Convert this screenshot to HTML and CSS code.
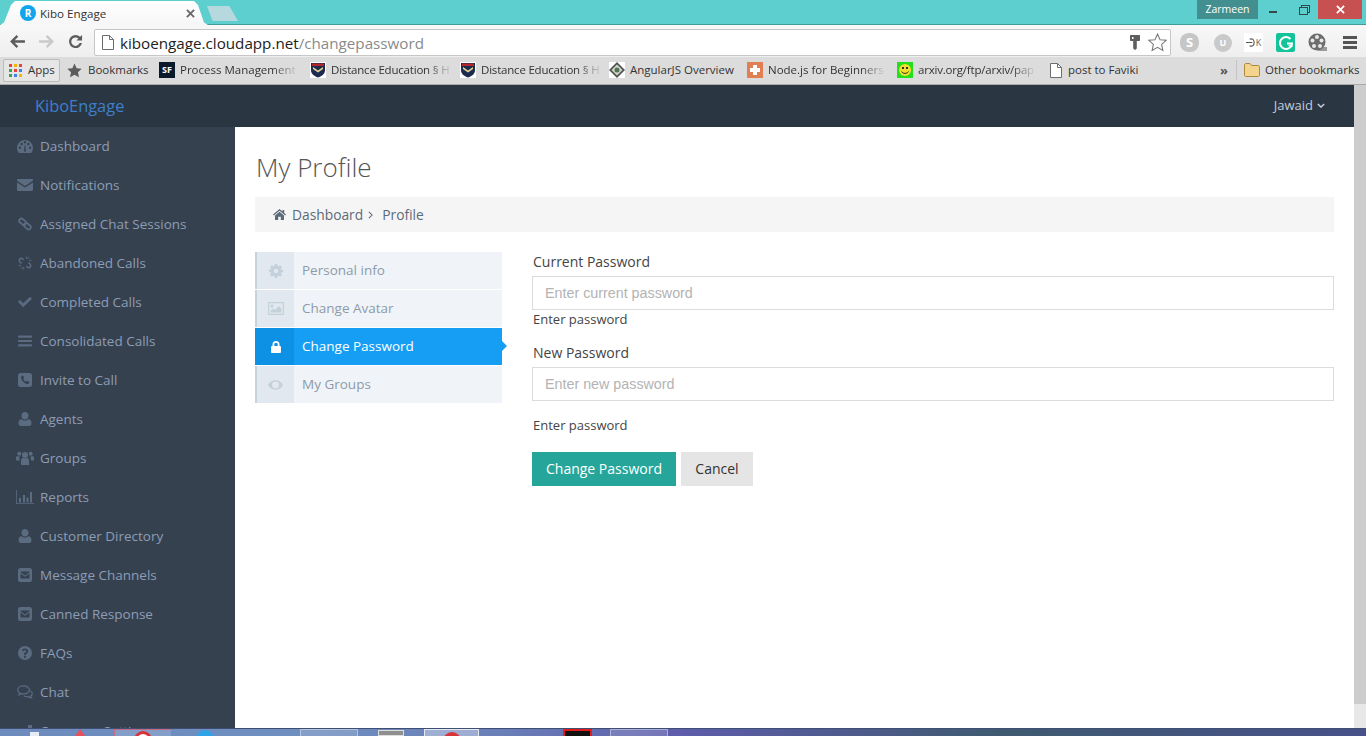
FILE: index.html
```html
<!DOCTYPE html>
<html lang="en">
<head>
  <meta charset="UTF-8">
  <title>Kibo Engage</title>
  <link rel="stylesheet" href="styles.css">
</head>
<body>

  <svg class="defs" width="0" height="0">
    <symbol id="i-gauge" viewBox="0 0 16 14"><path d="M8 1a8 8 0 0 0-8 8c0 1.600.5 3.100 1.300 4.300l.5.7h12.400l.5-.7A8 8 0 0 0 16 9a8 8 0 0 0-8-8zM3 10a1.200 1.200 0 1 1 0-2.400A1.200 1.200 0 0 1 3 10zm1.700-3.800a1.200 1.200 0 1 1 0-2.400 1.200 1.200 0 0 1 0 2.400zM8 4.500A1.200 1.200 0 1 1 8 2.100a1.200 1.200 0 0 1 0 2.400zm.9 8H7.100L7.600 6h.8zM13 10a1.200 1.200 0 1 1 0-2.400A1.200 1.200 0 0 1 13 10zm-1.700-3.800a1.200 1.200 0 1 1 0-2.400 1.200 1.200 0 0 1 0 2.400z" fill-rule="evenodd"/></symbol>
    <symbol id="i-mail" viewBox="-1 -1 18 14"><path d="M0 1.200C0 .5.500 0 1.200 0h13.600c.7 0 1.200.5 1.200 1.200v.6L8 7 0 1.800zM0 3.400V10.800c0 .7.500 1.200 1.200 1.200h13.600c.7 0 1.200-.5 1.200-1.200V3.400L8 8.600z"/></symbol>
    <symbol id="i-link" viewBox="0 0 16 16"><g fill="none" stroke="currentColor" stroke-width="2"><rect x="1" y="3" width="8.500" height="5" rx="2.500" transform="rotate(40 5.250 5.500)"/><rect x="6.500" y="8" width="8.500" height="5" rx="2.500" transform="rotate(40 10.750 10.500)"/></g></symbol>
    <symbol id="i-unlink" viewBox="0 0 16 16"><path fill="none" stroke="currentColor" stroke-width="1.700" d="M6.500 4.500 5 3a2.300 2.300 0 0 0-3.200 3.200L4 8.500M9.500 11.500 11 13a2.300 2.300 0 0 0 3.200-3.200L12 7.500"/><path fill="none" stroke="currentColor" d="M9.500 .5v3M12.500 1l-1.500 2.500M15.500 5h-3M6.500 15.500v-3M3.500 15 5 12.500M.5 11h3"/></symbol>
    <symbol id="i-check" viewBox="-2.300 -2 20.600 16"><path d="M6 12 0 6l2.200-2.200L6 7.500 13.800 0 16 2.200z"/></symbol>
    <symbol id="i-bars" viewBox="-2.500 -1.500 21 16"><path d="M0 0h16v2.600H0zM0 5.200h16v2.600H0zM0 10.400h16V13H0z"/></symbol>
    <symbol id="i-phone" viewBox="0 0 14 14"><path fill-rule="evenodd" d="M2.500 0h9A2.500 2.500 0 0 1 14 2.500v9a2.500 2.500 0 0 1-2.500 2.500h-9A2.500 2.500 0 0 1 0 11.500v-9A2.500 2.500 0 0 1 2.500 0zM5 2.600 3.800 3c-.8.400-.9 1.500-.5 2.800.6 2 2.900 4.300 4.900 4.900 1.300.4 2.400.3 2.800-.5l.4-1.200L8.900 7.800l-.9 1c-1.200-.5-2.300-1.600-2.800-2.800l1-.9z"/></symbol>
    <symbol id="i-user" viewBox="0 0 13 14"><path d="M6.500 0a3.500 3.500 0 0 1 3.500 3.800A3.500 3.500 0 0 1 6.500 7.500 3.500 3.500 0 0 1 3 3.800 3.500 3.500 0 0 1 6.500 0zM3.200 7.200c.9.800 2 1.300 3.300 1.300s2.400-.5 3.300-1.300C11.900 7.300 13 8.600 13 11.500 13 13 12 14 10.600 14H2.400C1 14 0 13 0 11.500 0 8.600 1.100 7.300 3.200 7.200z"/></symbol>
    <symbol id="i-users" viewBox="0 0 18 14"><circle cx="9" cy="4" r="3"/><circle cx="3.300" cy="2.700" r="2"/><circle cx="14.700" cy="2.700" r="2"/><path d="M5 14V10c0-2 1-3 2-3.200.5.400 1.200.7 2 .7s1.500-.3 2-.7C12 7 13 8 13 10v4zM0 9.500V7c0-1.300.7-2 1.500-2 .5.400 1.100.6 1.800.6h.5c-.2.500 0 1-.4 1.500C3 8 3.800 8.800 3.800 9.500zM18 9.500V7c0-1.300-.7-2-1.500-2-.5.400-1.100.6-1.800.6h-.5c.2.500 0 1 .4 1.500.9.900.2 1.700.2 2.400z"/></symbol>
    <symbol id="i-chart" viewBox="0 0 18 14"><path d="M0 0h.8v13.200H18v.8H0zM3 8h2v4.500H3zM7 5h2v7.500H7zM10.500 7.500h2v5h-2zM14 2h2v10.500h-2z"/></symbol>
    <symbol id="i-envelope-box" viewBox="0 0 14 14"><path fill-rule="evenodd" d="M2.500 0h9A2.500 2.500 0 0 1 14 2.500v9a2.500 2.500 0 0 1-2.500 2.500h-9A2.500 2.500 0 0 1 0 11.500v-9A2.500 2.500 0 0 1 2.500 0zM3 3.500c-.3 0-.5.200-.5.500v.3L7 7.500l4.500-3.200V4c0-.3-.2-.5-.5-.5zM2.500 5.600V10c0 .3.200.5.500.5h8c.3 0 .5-.2.500-.5V5.600L7 8.800z"/></symbol>
    <symbol id="i-help" viewBox="0 0 14 14"><path fill-rule="evenodd" d="M7 0a7 7 0 1 1 0 14A7 7 0 0 1 7 0zM6 9.700v2h2v-2zM7 2.500C5.500 2.500 4.400 3.200 3.800 4.300l1.400 1C5.600 4.700 6.100 4.300 6.900 4.300c.7 0 1.200.4 1.200.9 0 .6-.5.900-1.100 1.200-.7.400-1 1-1 1.700v.7h2v-.5c0-.4.300-.6.800-.9.800-.5 1.400-1.100 1.400-2.200 0-1.600-1.500-2.700-3.200-2.700z"/></symbol>
    <symbol id="i-chat" viewBox="0 0 17 15"><path fill="none" stroke="currentColor" stroke-width="1.300" d="M7 1C3.500 1 .7 2.900.7 5.300c0 1.400 1 2.600 2.400 3.400-.2.700-.6 1.300-1 1.700 1.100-.2 2-.6 2.800-1.100.7.100 1.400.2 2.100.2 3.500 0 6.300-1.900 6.300-4.200S10.500 1 7 1z"/><path fill="none" stroke="currentColor" stroke-width="1.300" d="M14.500 6.500c1.100.7 1.800 1.700 1.800 2.800 0 1.100-.8 2.100-2 2.800.2.700.6 1.200 1 1.600-1.200-.1-2.200-.6-3-1.200-2 .3-4-.1-5.300-1"/></symbol>
    <symbol id="i-cogs" viewBox="0 0 18 14"><path d="M3 6h6v6H3zM5 4h2v2H5zM12 1h4v4h-4z"/></symbol>
    <symbol id="i-gear" viewBox="0 0 14 14"><path fill-rule="evenodd" d="M5.700 0h2.600l.3 1.900 1 .4L11.200 1.200 13 3l-1.100 1.600.4 1 1.700.3v2.400l-1.700.3-.4 1L13 11l-1.800 1.800-1.600-1.100-1 .4-.3 1.900H5.700l-.3-1.900-1-.4-1.600 1.100L1 11l1.100-1.600-.4-1L0 8.100V5.700l1.700-.3.4-1L1 3l1.800-1.800 1.600 1.100 1-.4zM7 4.800a2.200 2.200 0 1 0 0 4.400 2.200 2.200 0 0 0 0-4.400z"/></symbol>
    <symbol id="i-picture" viewBox="0 0 16 13"><path fill-rule="evenodd" d="M1 0h14a1 1 0 0 1 1 1v11a1 1 0 0 1-1 1H1a1 1 0 0 1-1-1V1a1 1 0 0 1 1-1zm.2 1.200v10.600h13.600V1.200zM2.500 10.500V9L5.300 6.400 7 8l3.800-4 2.700 2.800v3.700zM4 5.500a1.500 1.500 0 1 1 0-3 1.500 1.500 0 0 1 0 3z"/></symbol>
    <symbol id="i-lock" viewBox="0 0 10 12"><path fill-rule="evenodd" d="M5 0a3.500 3.500 0 0 1 3.500 3.500V5h.5a1 1 0 0 1 1 1v5a1 1 0 0 1-1 1H1a1 1 0 0 1-1-1V6a1 1 0 0 1 1-1h.5V3.500A3.500 3.500 0 0 1 5 0zm0 1.800c-1 0-1.700.7-1.700 1.700V5h3.400V3.500c0-1-.7-1.700-1.700-1.700z"/></symbol>
    <symbol id="i-eye" viewBox="0 0 16 10"><path fill-rule="evenodd" d="M8 0c3.500 0 6.400 2 8 5-1.600 3-4.500 5-8 5S1.600 8 0 5c1.600-3 4.500-5 8-5zm0 1.300a3.700 3.700 0 1 0 0 7.400 3.700 3.700 0 0 0 0-7.400z"/></symbol>
    <symbol id="i-home" viewBox="0 0 13 11"><path d="M6.500 0 9.500 2.500V1h1.700v3l1.800 1.600-.8.900-5.700-4.800L.8 6.500 0 5.600zM2 6.500l4.500-3.700L11 6.500V11H7.800V7.800H5.200V11H2z"/></symbol>
    <symbol id="i-doc" viewBox="0 0 12 15"><path fill="#fff" stroke="#6d6d6d" d="M.5.500h7l4 4v10H.5z"/><path fill="none" stroke="#6d6d6d" d="M7.500.500v4h4"/></symbol>
    <symbol id="i-shield" viewBox="0 0 16 16"><path fill="#fff" d="M0 0h16v16H0z"/><path fill="#1d2a50" d="M1 1h14v7c0 4-3 6-7 7.500C4 14 1 12 1 8z"/><path fill="#b3262c" d="M2 1.500h12V4H2z"/><path fill="#e5d590" d="M3 5l5 3.500L13 5v2L8 10.500 3 7z"/></symbol>
  </svg>

  <div class="tabstrip">
    <div class="tab">
      <span class="tab-favicon">R</span>
      <span class="tab-title">Kibo Engage</span>
      <svg viewBox="0 0 10 10" width="9" height="9"><path fill="none" stroke="#666" stroke-width="2" d="M1 1l8 8M9 1l-8 8"/></svg>
    </div>
    <div class="new-tab"></div>
    <div class="win-controls">
      <span class="win-user">Zarmeen</span>
      <span class="win-btn"><span class="win-min"></span></span>
      <span class="win-btn"><span class="win-restore"></span></span>
      <span class="win-close"><svg viewBox="0 0 10 10" width="9" height="9"><path fill="none" stroke="#fff" stroke-width="2" d="M1 1l8 8M9 1l-8 8"/></svg></span>
    </div>
  </div>

  <div class="toolbar">
    <svg class="nav-icon" viewBox="0 0 16 14" width="15" height="13"><path fill="#5c5c5c" d="M7 0l1.800 1.800L5 5.600h11v2.800H5l3.800 3.800L7 14 0 7z"/></svg>
    <svg class="nav-icon" viewBox="0 0 16 14" width="15" height="13"><path fill="#c9c9c9" d="M9 0 7.200 1.800 11 5.600H0v2.800h11l-3.800 3.800L9 14l7-7z"/></svg>
    <svg class="nav-icon" viewBox="0 0 16 16" width="15" height="15"><path fill="#5c5c5c" d="M8 1a7 7 0 0 1 4.900 2L15 1v6H9l2.100-2.100A4.500 4.500 0 1 0 12.300 9.500h2.600A7 7 0 1 1 8 1z"/></svg>
    <div class="omnibox">
      <svg width="12" height="15"><use href="#i-doc"/></svg>
      <span class="url"><span class="url-host">kiboengage.cloudapp.net</span>/changepassword</span>
      <svg class="key-icon" viewBox="0 0 10 15" width="10" height="15"><path fill="#5e5e5e" fill-rule="evenodd" d="M1 0h8c.6 0 1 .4 1 1v4c0 .6-.4 1-1 1H6.800v7.500L5 15l-1.800-1.500V6H1c-.6 0-1-.4-1-1V1c0-.6.4-1 1-1zm1 2v2h1.500V2z"/></svg>
      <svg class="star-icon" viewBox="0 0 18 18" width="19" height="19"><path fill="#fff" stroke="#777" d="M9 1l2.400 5.300 5.800.6-4.300 3.900 1.200 5.700L9 13.600l-5.100 2.900 1.200-5.700L.8 6.900l5.800-.6z"/></svg>
    </div>
    <div class="ext-icons">
      <span class="ext ext-skype">S</span>
      <span class="ext ext-u">U</span>
      <span class="ext ext-k">
        <svg viewBox="0 0 11 10" width="10" height="9"><path fill="none" stroke="#555" stroke-width="1.200" d="M4 1.500c3-1.500 5 .5 5 3.500S7 10 4 8.500M0 5h7"/></svg>
        <span>K</span>
      </span>
      <span class="ext ext-g">
        <svg viewBox="0 0 14 14" width="14" height="14"><path fill="none" stroke="#fff" stroke-width="2" d="M11.500 3A6 6 0 1 0 13 7.500H8"/><path fill="#fff" d="M9 9h4.500v2H11z"/></svg>
      </span>
      <span class="ext ext-film">
        <svg viewBox="0 0 19 19" width="19" height="19"><path fill="#999" d="M10 14h9v4h-9z"/><circle cx="9" cy="9" r="8.500" fill="#6d6d6d"/><g fill="#e8e8e8"><circle cx="9" cy="4" r="2"/><circle cx="4.500" cy="7.500" r="2"/><circle cx="13.500" cy="7.500" r="2"/><circle cx="6" cy="13" r="2"/><circle cx="12" cy="13" r="2"/></g></svg>
      </span>
      <span class="ext-menu"></span>
    </div>
  </div>

  <div class="bookmarks">
    <div class="bm-apps">
      <span class="apps-grid">
        <i class="c-r"></i><i class="c-y"></i><i class="c-r"></i>
        <i class="c-g"></i><i class="c-r"></i><i class="c-b"></i>
        <i class="c-g"></i><i class="c-b"></i><i class="c-y"></i>
      </span>
      <span class="bm-text">Apps</span>
    </div>
    <div class="bm bm-star">
      <svg viewBox="0 0 16 16" width="15" height="15"><path fill="#5c5c5c" d="M8 .5l2.300 5 5.400.6-4 3.700 1.100 5.400L8 12.500l-4.800 2.700 1.100-5.400-4-3.700 5.400-.6z"/></svg>
      <span class="bm-text">Bookmarks</span>
    </div>
    <div class="bm bm-process">
      <span class="fav fav-sf">SF</span>
      <span class="bm-text bm-fade">Process Management</span>
    </div>
    <div class="bm bm-dist1">
      <svg width="16" height="16"><use href="#i-shield"/></svg>
      <span class="bm-text bm-fade bm-tight">Distance Education § H</span>
    </div>
    <div class="bm bm-dist2">
      <svg width="16" height="16"><use href="#i-shield"/></svg>
      <span class="bm-text bm-fade bm-tight">Distance Education § H</span>
    </div>
    <div class="bm bm-angular">
      <svg viewBox="0 0 16 16" width="16" height="16"><path fill="#fff" d="M0 0h16v16H0z"/><path fill="#555" d="M8 0l8 8-8 8-8-8z"/><path fill="#cfd8c8" d="M8 2.500 13.500 8 8 13.500 2.500 8z"/><circle cx="8" cy="8" r="2.500" fill="#56705a"/></svg>
      <span class="bm-text">AngularJS Overview</span>
    </div>
    <div class="bm bm-node">
      <span class="fav fav-node"></span>
      <span class="bm-text bm-fade">Node.js for Beginners</span>
    </div>
    <div class="bm bm-arxiv">
      <svg viewBox="0 0 16 16" width="16" height="16"><path fill="#22e01a" d="M0 0h16v16H0z"/><circle cx="8" cy="8" r="6" fill="#f0df2c"/><path fill="#333" d="M5 5h2v2H5zM9 5h2v2H9z"/><path fill="none" stroke="#333" d="M4.500 9.500c1.500 2.500 5.500 2.500 7 0"/></svg>
      <span class="bm-text bm-fade bm-tight">arxiv.org/ftp/arxiv/pap</span>
    </div>
    <div class="bm bm-post">
      <svg width="12" height="15"><use href="#i-doc"/></svg>
      <span class="bm-text">post to Faviki</span>
    </div>
    <div class="bm-more">&raquo;</div>
    <div class="bm bm-other">
      <svg viewBox="0 0 16 14" width="16" height="14"><path fill="#f4d38c" stroke="#b08a3c" d="M.5 2c0-.8.500-1.500 1.500-1.500h4l1.500 2H14c1 0 1.500.5 1.500 1.500v8c0 1-.5 1.500-1.500 1.500H2c-1 0-1.500-.5-1.500-1.500z"/></svg>
      <span class="bm-text">Other bookmarks</span>
    </div>
  </div>

  <div class="app">
    <div class="app-main">
      <header class="topbar">
        <a class="brand">KiboEngage</a>
        <div class="user-menu">Jawaid
          <svg viewBox="0 0 10 6" width="8" height="5"><path fill="none" stroke="currentColor" stroke-width="1.800" d="M1 1l4 4 4-4"/></svg>
        </div>
      </header>
      <div class="columns">
        <nav class="sidebar">
          <a class="nav-item"><svg class="ic-16"><use href="#i-gauge"/></svg>Dashboard</a>
          <a class="nav-item"><svg class="ic-16"><use href="#i-mail"/></svg>Notifications</a>
          <a class="nav-item"><svg class="ic-16"><use href="#i-link"/></svg>Assigned Chat Sessions</a>
          <a class="nav-item"><svg class="ic-16"><use href="#i-unlink"/></svg>Abandoned Calls</a>
          <a class="nav-item"><svg class="ic-16"><use href="#i-check"/></svg>Completed Calls</a>
          <a class="nav-item"><svg class="ic-16"><use href="#i-bars"/></svg>Consolidated Calls</a>
          <a class="nav-item"><svg class="ic-16"><use href="#i-phone"/></svg>Invite to Call</a>
          <a class="nav-item"><svg class="ic-16"><use href="#i-user"/></svg>Agents</a>
          <a class="nav-item"><svg class="ic-16"><use href="#i-users"/></svg>Groups</a>
          <a class="nav-item"><svg class="ic-16"><use href="#i-chart"/></svg>Reports</a>
          <a class="nav-item"><svg class="ic-16"><use href="#i-user"/></svg>Customer Directory</a>
          <a class="nav-item"><svg class="ic-16"><use href="#i-envelope-box"/></svg>Message Channels</a>
          <a class="nav-item"><svg class="ic-16"><use href="#i-envelope-box"/></svg>Canned Response</a>
          <a class="nav-item"><svg class="ic-16"><use href="#i-help"/></svg>FAQs</a>
          <a class="nav-item"><svg class="ic-16"><use href="#i-chat"/></svg>Chat</a>
          <a class="nav-item"><svg class="ic-16"><use href="#i-cogs"/></svg>Company Settings</a>
        </nav>
        <main class="content">
          <h1 class="page-title">My Profile</h1>
          <div class="breadcrumb">
            <svg width="13" height="11"><use href="#i-home"/></svg>
            <span>Dashboard</span>
            <svg class="crumb-sep" viewBox="0 0 6 10" width="5" height="8"><path fill="none" stroke="currentColor" stroke-width="1.300" d="M1 1l4 4-4 4"/></svg>
            <span>Profile</span>
          </div>
          <div class="profile">
            <ul class="tabs">
              <li class="tab-row"><span class="tab-ic"><svg width="14" height="14"><use href="#i-gear"/></svg></span><span class="tab-text">Personal info</span></li>
              <li class="tab-row"><span class="tab-ic"><svg width="16" height="13"><use href="#i-picture"/></svg></span><span class="tab-text">Change Avatar</span></li>
              <li class="tab-row active"><span class="tab-ic"><svg width="10" height="12"><use href="#i-lock"/></svg></span><span class="tab-text">Change Password</span></li>
              <li class="tab-row"><span class="tab-ic"><svg width="15" height="10"><use href="#i-eye"/></svg></span><span class="tab-text">My Groups</span></li>
            </ul>
            <form class="pw-form">
              <label class="field-label">Current Password</label>
              <input class="field-input" type="password" placeholder="Enter current password">
              <p class="field-help">Enter password</p>
              <label class="field-label second">New Password</label>
              <input class="field-input" type="password" placeholder="Enter new password">
              <p class="field-help spaced">Enter password</p>
              <div class="actions">
                <button class="btn btn-primary" type="button">Change Password</button>
                <button class="btn btn-cancel" type="button">Cancel</button>
              </div>
            </form>
          </div>
        </main>
      </div>
    </div>
    <div class="scrollbar"><div class="thumb"></div></div>
  </div>

  <div class="taskbar">
    <span class="task-orb"></span>
    <span class="task-tip"></span>
    <span class="task task-chrome"><i class="dot dot-white"></i></span>
    <span class="dot dot-blue"></span>
    <span class="task task-win"></span>
    <span class="task-doc"></span>
    <span class="task task-active"><i class="dot dot-red"></i></span>
    <span class="task-red"></span>
    <span class="task task-purple"></span>
  </div>

</body>
</html>
```

FILE: styles.css
```css
* {
  box-sizing: border-box;
}

html, body {
  height: 100%;
}

body {
  margin: 0;
  font-family: "Open Sans", sans-serif;
  font-size: 14px;
  color: #333;
  display: flex;
  flex-direction: column;
  overflow: hidden;
}

.defs {
  position: absolute;
}

/* browser window */
.tabstrip {
  height: 25px;
  flex: none;
  background: #5dcfce;
  border-bottom: 1px solid #3f9c9b;
  display: flex;
  align-items: flex-end;
}

.tab {
  width: 208px;
  height: 24px;
  margin-bottom: -1px;
  padding: 0 13px 0 20px;
  display: flex;
  align-items: center;
  background: linear-gradient(#fff, #f6f6f6);
  clip-path: polygon(0 100%, 4px 90%, 11px 4px, 15px 0, 194px 0, 198px 4px, 204px 90%, 208px 100%);
}

.tab-favicon {
  width: 16px;
  height: 16px;
  border-radius: 50%;
  background: #12a5ec;
  color: #fff;
  font-size: 10px;
  font-weight: 700;
  text-align: center;
  line-height: 16px;
}

.tab-title {
  margin-left: 4px;
  font-size: 11.6px;
  color: #333;
  flex: 1;
}

.new-tab {
  width: 31px;
  height: 15px;
  margin: 0 0 3px -1px;
  background: #b6d8df;
  clip-path: polygon(0 0, 72% 0, 100% 100%, 18% 100%);
}

.win-controls {
  margin-left: auto;
  padding-right: 4px;
  align-self: flex-start;
  display: flex;
  height: 19px;
}

.win-user {
  width: 61px;
  background: #438f90;
  color: #fff;
  font-size: 10.5px;
  text-align: center;
  line-height: 18px;
}

.win-btn {
  width: 30px;
  display: flex;
  align-items: center;
  justify-content: center;
}

.win-min {
  width: 8px;
  height: 2px;
  margin-top: 5px;
  background: #2e4a4a;
}

.win-restore {
  width: 9px;
  height: 8px;
  margin-top: 2px;
  border: 1px solid #2e4a4a;
  box-shadow: 2px -2px 0 -1px #5dcfce, 2px -2px 0 0 #2e4a4a;
}

.win-close {
  width: 44px;
  background: #c75050;
  display: flex;
  align-items: center;
  justify-content: center;
}

.toolbar {
  height: 32px;
  flex: none;
  background: linear-gradient(#f8f8f8, #eee);
  display: flex;
  align-items: center;
  padding: 3px 0 0 10px;
}

.nav-icon {
  margin: 0 14px 2px 0;
}

.omnibox {
  width: 1077px;
  height: 27px;
  margin-left: -3px;
  padding: 0 3px 0 7px;
  background: #fff;
  border: 1px solid #c6c6c6;
  border-radius: 2px;
  display: flex;
  align-items: center;
}

.url {
  margin-left: 6px;
  font-size: 15.2px;
  color: #8a8a8a;
  flex: 1;
}

.url-host {
  color: #222;
}

.star-icon {
  margin-left: 8px;
}

.ext-icons {
  display: flex;
  align-items: center;
  margin-left: 9px;
}

.ext {
  width: 19px;
  height: 19px;
  font-size: 11px;
  font-weight: 700;
  text-align: center;
  line-height: 19px;
  color: #fff;
  display: flex;
  align-items: center;
  justify-content: center;
}

.ext-skype {
  background: #c6c6c6;
  border-radius: 45%;
  font-size: 13px;
}

.ext-u {
  width: 18px;
  height: 18px;
  margin-left: 15px;
  background: #c9c9c9;
  border-radius: 50%;
  font-size: 9px;
}

.ext-k {
  margin-left: 12px;
  background: #fff;
  color: #666;
  font-size: 9px;
  font-weight: 400;
}

.ext-g {
  margin-left: 13px;
  background: #15c39a;
  border-radius: 2px;
}

.ext-film {
  margin-left: 13px;
}

.ext-menu {
  width: 14px;
  height: 13px;
  margin-left: 16px;
  border-top: 3px solid #555;
  border-bottom: 3px solid #555;
  background: linear-gradient(#555, #555) center / 100% 3px no-repeat;
}

.bookmarks {
  height: 28px;
  flex: none;
  background: #dcdcdc;
  border-bottom: 1px solid #aaa;
  display: flex;
  align-items: center;
  font-size: 11.5px;
  color: #333;
  padding: 0 0 1px 3px;
}

.bm-apps {
  width: 57px;
  height: 23px;
  margin-right: 7px;
  padding-left: 5px;
  flex: none;
  display: flex;
  align-items: center;
  gap: 6px;
  border: 1px solid #bbb;
  border-radius: 2px;
  background: #e6e6e6;
}

.apps-grid {
  width: 13px;
  height: 13px;
  display: grid;
  grid-template-columns: repeat(3, 3px);
  gap: 2px;
}

.apps-grid i {
  display: block;
  height: 3px;
}

.c-r { background: #e5463a; }
.c-y { background: #f5b400; }
.c-b { background: #3f82f0; }
.c-g { background: #2fa84f; }

.bm {
  flex: none;
  display: flex;
  align-items: center;
  gap: 5px;
  white-space: nowrap;
}

.bm-text {
  margin-bottom: 2px;
}

.bm-star { width: 92px; gap: 6px; }
.bm-process { width: 151px; }
.bm-dist1 { width: 150px; }
.bm-dist2 { width: 149px; }
.bm-angular { width: 138px; }
.bm-node { width: 150px; }
.bm-arxiv { width: 153px; }
.bm-post { width: 170px; gap: 6px; }

.bm-fade {
  -webkit-mask-image: linear-gradient(to right, #000 80%, rgba(0, 0, 0, 0.1));
  mask-image: linear-gradient(to right, #000 80%, rgba(0, 0, 0, 0.1));
}

.bm-tight {
  letter-spacing: -0.2px;
}

.fav {
  width: 16px;
  height: 16px;
  flex: none;
}

.fav-sf {
  background: #0a1a2a;
  color: #fff;
  font-size: 9px;
  font-weight: 700;
  text-align: center;
  line-height: 16px;
}

.fav-node {
  background: linear-gradient(#fff, #fff) center / 10px 4px no-repeat,
    linear-gradient(#fff, #fff) center / 4px 10px no-repeat,
    #e27f52;
}

.bm-more {
  width: 16px;
  flex: none;
  font-size: 13px;
  color: #555;
  font-weight: 700;
}

.bm-other {
  height: 20px;
  padding-left: 7px;
  border-left: 1px solid #c4c4c4;
}

/* page */
.app {
  flex: 1;
  min-height: 0;
  display: flex;
}

.app-main {
  flex: 1;
  min-width: 0;
  display: flex;
  flex-direction: column;
}

.topbar {
  height: 42px;
  flex: none;
  background: #2b3643;
  display: flex;
  align-items: center;
  justify-content: space-between;
  padding: 0 29px 2px 35px;
}

.brand {
  color: #3d7fc9;
  font-size: 16.4px;
}

.user-menu {
  display: flex;
  align-items: center;
  gap: 4px;
  font-size: 13px;
  color: #c1cbd8;
}

.columns {
  flex: 1;
  min-height: 0;
  display: flex;
}

.sidebar {
  width: 235px;
  flex: none;
  background: #364150;
  overflow: hidden;
}

.nav-item {
  height: 39px;
  padding: 0 0 1px 16px;
  display: flex;
  align-items: center;
  gap: 6px;
  font-size: 13.5px;
  color: #8c9db5;
  white-space: nowrap;
}

.ic-16 {
  width: 18px;
  height: 14px;
  color: #5b6b80;
  fill: #5b6b80;
}

.content {
  flex: 1;
  min-width: 0;
  background: #fff;
  padding: 0 20px;
}

.page-title {
  margin: 22px 0 0;
  padding-left: 1px;
  font-size: 26px;
  font-weight: 300;
  line-height: 36px;
  color: #555;
}

.breadcrumb {
  height: 35px;
  margin-top: 12px;
  padding-left: 18px;
  background: #f5f5f5;
  display: flex;
  align-items: center;
  color: #5c6b7a;
  font-size: 13.8px;
  gap: 6px;
}

.breadcrumb > svg:first-child {
  fill: #5c6b7a;
}

.crumb-sep {
  margin: 0 3px 0 -1px;
}

.profile {
  margin-top: 20px;
  display: flex;
}

.tabs {
  width: 247px;
  flex: none;
  margin: 0;
  padding: 0;
  list-style: none;
}

.tab-row {
  height: 37px;
  margin-bottom: 1px;
  display: flex;
  align-items: center;
  background: #f0f4f8;
  color: #8d9ba8;
  font-size: 13.5px;
}

.tab-ic {
  width: 39px;
  height: 100%;
  display: flex;
  align-items: center;
  justify-content: center;
  background: #e1e8ef;
  border-left: 2px solid #c6d3dd;
  fill: #c4d0da;
}

.tab-text {
  margin: 0 0 1px 8px;
}

.tab-row.active {
  position: relative;
  background: #169ef4;
  color: #fff;
}

.tab-row.active .tab-ic {
  background: #0c91e5;
  border-left-color: #0c91e5;
  fill: #fff;
}

.tab-row.active::after {
  content: "";
  position: absolute;
  left: 100%;
  top: 13px;
  border-left: 5px solid #169ef4;
  border-top: 5px solid transparent;
  border-bottom: 5px solid transparent;
}

.pw-form {
  flex: 1;
  min-width: 0;
  margin-left: 30px;
}

.field-label {
  display: block;
  height: 24px;
  padding-left: 1px;
  color: #444;
  line-height: 20px;
}

.field-label.second {
  margin-top: 14px;
}

.field-input {
  display: block;
  width: 100%;
  height: 34px;
  padding: 0 12px;
  border: 1px solid #dcdcdc;
  font-family: "Liberation Sans", sans-serif;
  font-size: 14.3px;
  outline: none;
}

.field-input::placeholder {
  color: #b3b3b3;
}

.field-help {
  margin: -1px 0 0;
  height: 20px;
  padding-left: 1px;
  font-size: 13px;
  line-height: 20px;
  color: #444;
}

.field-help.spaced {
  margin-top: 14px;
}

.actions {
  margin-top: 17px;
  display: flex;
  gap: 5px;
}

.btn {
  height: 34px;
  padding: 0 14px 2px;
  border: none;
  font-family: "Open Sans", sans-serif;
  font-size: 14px;
}

.btn-primary {
  background: #26a69a;
  color: #fff;
}

.btn-cancel {
  width: 72px;
  background: #e5e5e5;
  color: #333;
}

.scrollbar {
  width: 12px;
  flex: none;
  background: #e8e8e8;
}

.thumb {
  height: 619px;
  background: #cdcdcd;
}

/* desktop taskbar behind the window */
.taskbar {
  height: 8px;
  flex: none;
  background: linear-gradient(90deg, #6d8bbd, #6f8fc0 300px, #6a7fb8 500px, #5e5cab 680px, #3f5a70 1000px, #475189);
  border-top: 1px solid #3f4f73;
  display: flex;
  align-items: flex-start;
  overflow: hidden;
}

.task {
  width: 58px;
  height: 8px;
  flex: none;
  display: flex;
  justify-content: center;
  background: rgba(255, 255, 255, 0.15);
  border: 1px solid rgba(255, 255, 255, 0.4);
  border-bottom: none;
}

.dot {
  width: 18px;
  height: 18px;
  flex: none;
  border-radius: 50%;
}

.dot-white { margin-top: 1px; background: #fff; border: 3px solid #d9333a; }
.dot-blue { margin: 1px 0 0 24px; background: #2ea3e8; }
.dot-red { margin-top: 2px; background: #d9333a; }

.task-orb {
  width: 9px;
  height: 4px;
  margin: 3px 0 0 30px;
  background: #e8edf5;
  flex: none;
}

.task-tip {
  width: 10px;
  height: 7px;
  margin-left: 36px;
  background: #e8505a;
  clip-path: polygon(50% 0, 100% 100%, 0 100%);
  flex: none;
}

.task-chrome {
  margin-left: 29px;
  border-color: #c66b85;
}

.task-win {
  margin-left: 86px;
}

.task-doc {
  width: 26px;
  height: 6px;
  margin: 1px 0 0 20px;
  background: #8f8f8f;
  border: 1px solid #ddd;
  flex: none;
}

.task-active {
  width: 55px;
  margin-left: 20px;
  background: rgba(255, 255, 255, 0.35);
  border-color: #e4e9f2;
}

.task-red {
  width: 29px;
  height: 8px;
  margin-left: 84px;
  background: #111;
  border: 2px solid #e21b1b;
  border-bottom: none;
  flex: none;
}

.task-purple {
  margin-left: 18px;
}
```
